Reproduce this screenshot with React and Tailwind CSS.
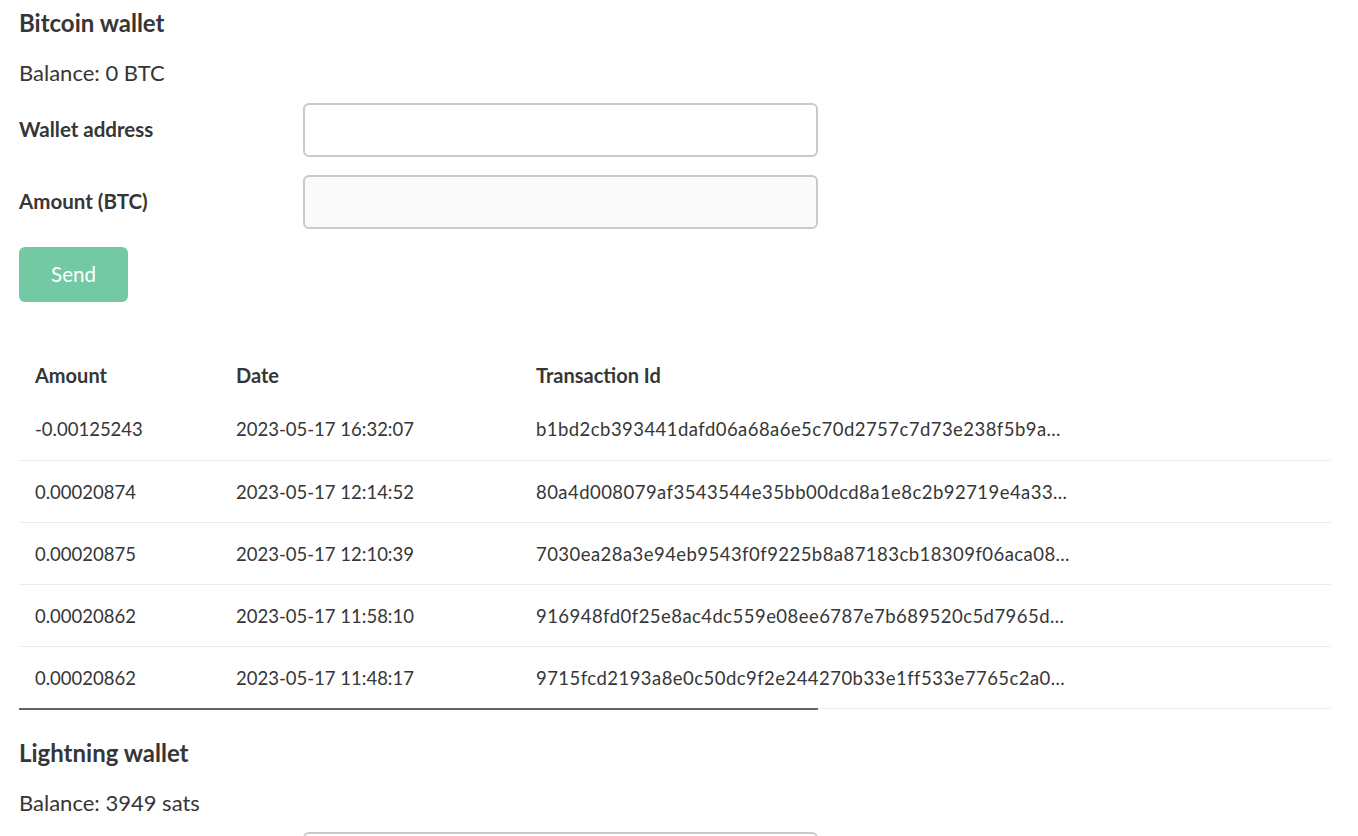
import React from "react";

const rows = [
  ["-0.00125243", "2023-05-17 16:32:07", "b1bd2cb393441dafd06a68a6e5c70d2757c7d73e238f5b9a…"],
  ["0.00020874", "2023-05-17 12:14:52", "80a4d008079af3543544e35bb00dcd8a1e8c2b92719e4a33…"],
  ["0.00020875", "2023-05-17 12:10:39", "7030ea28a3e94eb9543f0f9225b8a87183cb18309f06aca08…"],
  ["0.00020862", "2023-05-17 11:58:10", "916948fd0f25e8ac4dc559e08ee6787e7b689520c5d7965d…"],
  ["0.00020862", "2023-05-17 11:48:17", "9715fcd2193a8e0c50dc9f2e244270b33e1ff533e7765c2a0…"],
];

function Field({ label, disabled }) {
  return (
    <div className="flex items-center">
      <label className="w-[284px] text-[20.5px] leading-[30px] font-bold pb-[3px]">{label}</label>
      <input
        disabled={disabled}
        className={
          "w-[515px] h-[54px] rounded-[6px] border-2 border-[#c9c9c9] outline-none " +
          (disabled ? "bg-[#fafafa]" : "bg-white")
        }
      />
    </div>
  );
}

export default function App() {
  return (
    <div
      className="min-h-screen bg-white text-[#363636] px-[19px] pt-[8px]"
      style={{ fontFamily: "Lato, 'Noto Sans', sans-serif" }}
    >
      <h2 className="text-[24px] leading-[30px] font-bold">Bitcoin wallet</h2>
      <p className="mt-[20px] text-[22px] leading-[30px]">Balance: 0 BTC</p>
      <div className="mt-[15px] flex flex-col gap-[18px]">
        <Field label="Wallet address" />
        <Field label="Amount (BTC)" disabled />
      </div>
      <button className="mt-[18px] w-[109px] h-[55px] rounded-[6px] bg-[#73c9a3] text-white text-[20.5px]">
        Send
      </button>

      <table className="mt-[50px] w-[1312px] border-collapse text-[18.5px]">
        <thead>
          <tr className="h-[46px] text-[20px]">
            <th className="w-[201px] pl-[16px] text-left font-bold">Amount</th>
            <th className="w-[300px] pl-[16px] text-left font-bold">Date</th>
            <th className="pl-[16px] text-left font-bold">Transaction Id</th>
          </tr>
        </thead>
        <tbody>
          {rows.map((r, i) => (
            <tr key={i} className="h-[62px] border-b border-[#ececec]">
              <td className="pl-[16px] pt-[3px]">{r[0]}</td>
              <td className="pl-[16px] pt-[3px]">{r[1]}</td>
              <td className="pl-[16px] pt-[3px] tracking-[0.45px]">{r[2]}</td>
            </tr>
          ))}
        </tbody>
      </table>
      <div className="mt-[-1px] h-[2px] w-[799px] bg-[#666666]" />

      <h2 className="mt-[28px] text-[24px] leading-[30px] font-bold">Lightning wallet</h2>
      <p className="mt-[20px] text-[22px] leading-[30px]">Balance: 3949 sats</p>
      <div className="mt-[14px] flex">
        <div className="w-[284px]" />
        <input className="w-[515px] h-[54px] rounded-[6px] border-2 border-[#c9c9c9] bg-white outline-none" />
      </div>
    </div>
  );
}
